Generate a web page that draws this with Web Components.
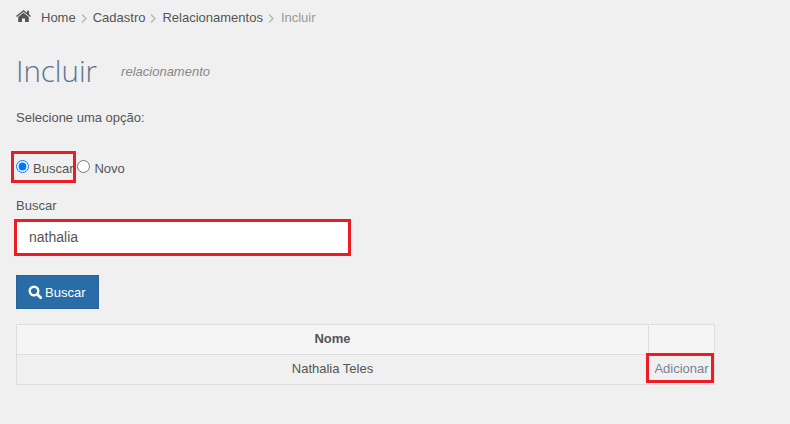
<!DOCTYPE html>
<html>
<head>
<meta charset="utf-8">
<style>
    html, body { margin: 0; background: #f0f0f0; }
    body { font: 13px/20px "Liberation Sans", Arial, sans-serif; color: #555; }
</style>
</head>
<body>
<app-page></app-page>
<script>
const crumbsTemplate = document.createElement('template');
crumbsTemplate.innerHTML = `
    <style>
        :host { display: flex; align-items: center; height: 20px; font-size: 13px; color: #555; }
        span { padding-top: 2px; }
        svg.home { width: 15px; height: 12px; margin-right: 10px; margin-top: -2px; fill: #555; }
        svg.sep { width: 6px; height: 9px; margin: 2px 6px 0 5px; fill: none; stroke: #b5b5b5; stroke-width: 1.3; }
        .last { color: #999; margin-left: 1px; }
    </style>
    <svg class="home" viewBox="0 0 15 13" preserveAspectRatio="none"><path d="M7.5 0 L11 3 V.8 H13 V4.7 L15 6.5 L14.1 7.6 L7.5 1.9 L.9 7.6 L0 6.5 Z M2.2 7.6 L7.5 3 L12.8 7.6 V13 H9 V9.2 H6 V13 H2.2 Z"/></svg>
    <span>Home</span><svg class="sep" viewBox="0 0 6 9"><path d="M1 .5 L5 4.5 L1 8.5"/></svg>
    <span>Cadastro</span><svg class="sep" viewBox="0 0 6 9"><path d="M1 .5 L5 4.5 L1 8.5"/></svg>
    <span>Relacionamentos</span><svg class="sep" viewBox="0 0 6 9"><path d="M1 .5 L5 4.5 L1 8.5"/></svg>
    <span class="last">Incluir</span>
`;

class AppCrumbs extends HTMLElement {
    constructor() {
        super();
        this.attachShadow({ mode: 'open' });
        this.shadowRoot.appendChild(crumbsTemplate.content.cloneNode(true));
    }
}

const titleTemplate = document.createElement('template');
titleTemplate.innerHTML = `
    <style>
        :host { display: flex; align-items: baseline; gap: 24px; }
        h1 { margin: 0; font: 300 29.5px/40px "Open Sans", sans-serif; color: #5f7390; }
        small { font: italic 13px/20px "Liberation Sans", Arial, sans-serif; color: #888; position: relative; top: -6px; }
    </style>
    <h1><slot></slot></h1>
    <small><slot name="sub"></slot></small>
`;

class AppTitle extends HTMLElement {
    constructor() {
        super();
        this.attachShadow({ mode: 'open' });
        this.shadowRoot.appendChild(titleTemplate.content.cloneNode(true));
    }
}

const radioTemplate = document.createElement('template');
radioTemplate.innerHTML = `
    <style>
        :host { display: inline-flex; align-items: center; height: 20px; position: relative; }
        input { width: 13px; height: 13px; margin: 0 4px 3px 0; }
        span { padding-top: 2px; }
        :host([checked]) .mark { display: block; }
        .mark {
            display: none;
            position: absolute; left: -5px; top: -7px; width: 59px; height: 26px;
            border: 3px solid #ed1c24;
        }
    </style>
    <input type="radio" name="tipo">
    <span><slot></slot></span>
    <div class="mark"></div>
`;

class AppRadio extends HTMLElement {
    constructor() {
        super();
        this.attachShadow({ mode: 'open' });
        this.shadowRoot.appendChild(radioTemplate.content.cloneNode(true));
    }

    connectedCallback() {
        this.shadowRoot.querySelector('input').checked = this.hasAttribute('checked');
    }
}

const fieldTemplate = document.createElement('template');
fieldTemplate.innerHTML = `
    <style>
        :host { display: block; }
        label { display: block; margin-bottom: 3px; }
        input {
            display: block; box-sizing: border-box; width: 337px; height: 37px;
            margin-left: -2px; padding: 0 12px 2px;
            background: #fff; border: 3px solid #ed1c24; outline: none; border-radius: 0;
            font: 14px "Liberation Sans", Arial, sans-serif; color: #555;
        }
    </style>
    <label><slot></slot></label>
    <input type="text">
`;

class AppField extends HTMLElement {
    constructor() {
        super();
        this.attachShadow({ mode: 'open' });
        this.shadowRoot.appendChild(fieldTemplate.content.cloneNode(true));
    }

    connectedCallback() {
        this.shadowRoot.querySelector('input').value = this.getAttribute('value') || '';
    }
}

const buttonTemplate = document.createElement('template');
buttonTemplate.innerHTML = `
    <style>
        :host { display: inline-flex; }
        button {
            display: flex; align-items: center; gap: 3px; box-sizing: border-box;
            width: 83px; height: 34px; padding: 0 0 0 11px;
            background: #286ca8; border: 1px solid #2a6496; border-radius: 0;
            color: #fff; font: 13px "Liberation Sans", Arial, sans-serif;
        }
        svg { width: 14px; height: 14px; fill: none; stroke: #fff; }
    </style>
    <button>
        <svg viewBox="0 0 14 14"><circle cx="6" cy="6" r="4.3" stroke-width="2.4"/><path d="M9.2 9.2 L12.8 12.8" stroke-width="2.8" stroke-linecap="round"/></svg>
        <span><slot></slot></span>
    </button>
`;

class AppButton extends HTMLElement {
    constructor() {
        super();
        this.attachShadow({ mode: 'open' });
        this.shadowRoot.appendChild(buttonTemplate.content.cloneNode(true));
    }
}

const tableTemplate = document.createElement('template');
tableTemplate.innerHTML = `
    <style>
        :host { display: block; width: 699px; }
        table { width: 100%; border-collapse: collapse; table-layout: fixed; }
        th, td { height: 30px; padding: 0 5px 2px; border: 1px solid #ddd; text-align: center; box-sizing: border-box; }
        th { background: #f5f5f5; font-weight: bold; color: #555; }
        .act { width: 66px; }
        td.act { position: relative; color: #76839a; white-space: nowrap; padding: 0 0 2px; }
        .mark {
            position: absolute; left: -3px; top: -2px; width: 62px; height: 24px;
            border: 3px solid #ed1c24;
        }
    </style>
    <table>
        <tr><th>Nome</th><th class="act"></th></tr>
        <tr><td>Nathalia Teles</td><td class="act">Adicionar<div class="mark"></div></td></tr>
    </table>
`;

class AppTable extends HTMLElement {
    constructor() {
        super();
        this.attachShadow({ mode: 'open' });
        this.shadowRoot.appendChild(tableTemplate.content.cloneNode(true));
    }
}

const pageTemplate = document.createElement('template');
pageTemplate.innerHTML = `
    <style>
        :host { display: block; box-sizing: border-box; height: 424px; padding: 7px 16px 0; }
        app-title { margin-top: 24px; }
        p { margin: 17px 0 0; }
        .radios { display: flex; gap: 4px; margin-top: 30px; }
        app-field { margin-top: 18px; }
        app-button { margin-top: 19px; }
        app-table { margin-top: 15px; }
    </style>
    <app-crumbs></app-crumbs>
    <app-title>Incluir<span slot="sub">relacionamento</span></app-title>
    <p>Selecione uma opção:</p>
    <div class="radios">
        <app-radio checked>Buscar</app-radio>
        <app-radio>Novo</app-radio>
    </div>
    <app-field value="nathalia">Buscar</app-field>
    <app-button>Buscar</app-button>
    <app-table></app-table>
`;

class AppPage extends HTMLElement {
    constructor() {
        super();
        this.attachShadow({ mode: 'open' });
        this.shadowRoot.appendChild(pageTemplate.content.cloneNode(true));
    }
}

window.customElements.define('app-crumbs', AppCrumbs);
window.customElements.define('app-title', AppTitle);
window.customElements.define('app-radio', AppRadio);
window.customElements.define('app-field', AppField);
window.customElements.define('app-button', AppButton);
window.customElements.define('app-table', AppTable);
window.customElements.define('app-page', AppPage);
</script>
</body>
</html>
